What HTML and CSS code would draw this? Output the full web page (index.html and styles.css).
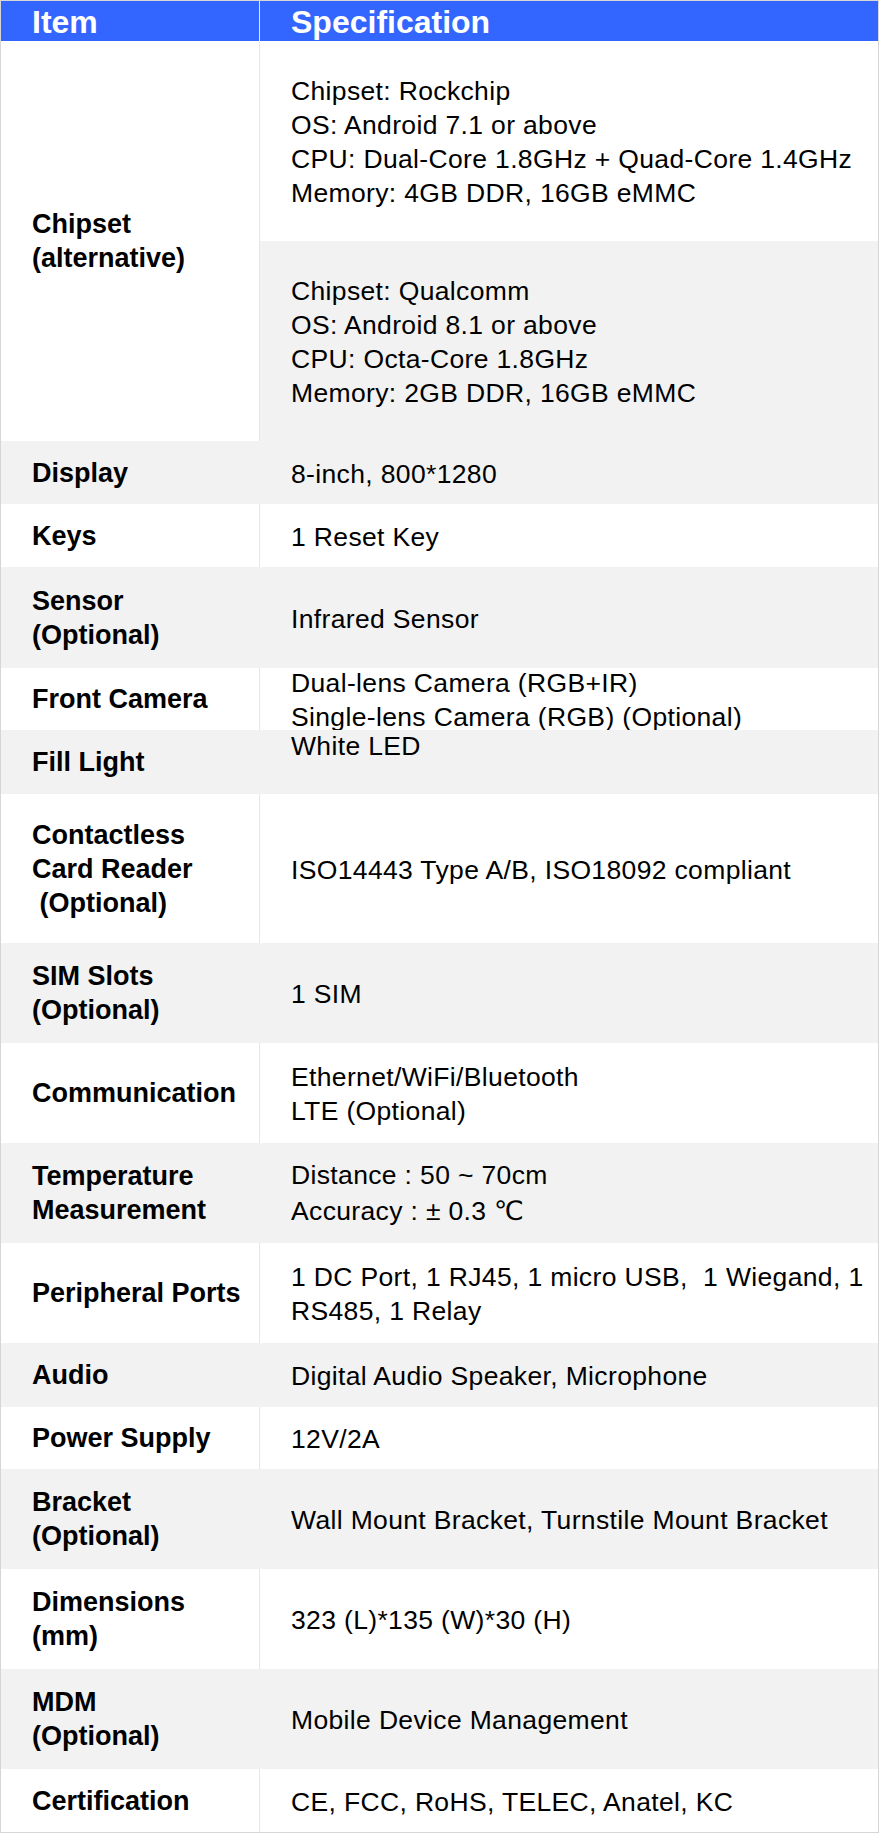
FILE: index.html
```html
<!DOCTYPE html>
<html lang="en">
<head>
<meta charset="utf-8">
<title>Specification</title>
<link rel="stylesheet" href="styles.css">
</head>
<body>
<table class="spec">
  <thead>
    <tr class="head">
      <th class="c1"><div class="hbox">Item</div></th>
      <th class="c2"><div class="hbox">Specification</div></th>
    </tr>
  </thead>
  <tbody>
    <tr class="w">
      <td class="label c1 keep" rowspan="2"><div class="box h400"><p>Chipset<br>(alternative)</p></div></td>
      <td class="val"><div class="box h200"><p>Chipset: Rockchip<br>OS: Android 7.1 or above<br>CPU: Dual-Core 1.8GHz + Quad-Core 1.4GHz<br>Memory: 4GB DDR, 16GB eMMC</p></div></td>
    </tr>
    <tr class="g">
      <td class="val"><div class="box h200"><p>Chipset: Qualcomm<br>OS: Android 8.1 or above<br>CPU: Octa-Core 1.8GHz<br>Memory: 2GB DDR, 16GB eMMC</p></div></td>
    </tr>
    <tr class="g">
      <td class="label c1"><div class="box h63"><p>Display</p></div></td>
      <td class="val"><div class="box h63"><p>8-inch, 800*1280</p></div></td>
    </tr>
    <tr class="w">
      <td class="label c1"><div class="box h63"><p>Keys</p></div></td>
      <td class="val"><div class="box h63"><p>1 Reset Key</p></div></td>
    </tr>
    <tr class="g">
      <td class="label c1"><div class="box h101"><p>Sensor<br>(Optional)</p></div></td>
      <td class="val"><div class="box h101"><p>Infrared Sensor</p></div></td>
    </tr>
    <tr class="w">
      <td class="label c1"><div class="box h62"><p>Front Camera</p></div></td>
      <td class="val"><div class="box h62"><p>Dual-lens Camera (RGB+IR)<br>Single-lens Camera (RGB) (Optional)</p></div></td>
    </tr>
    <tr class="g">
      <td class="label c1"><div class="box h64"><p>Fill Light</p></div></td>
      <td class="val"><div class="box h64"><p>White LED<br>&nbsp;</p></div></td>
    </tr>
    <tr class="w">
      <td class="label c1"><div class="box h149"><p>Contactless<br>Card Reader<br>&nbsp;(Optional)</p></div></td>
      <td class="val"><div class="box h149"><p>ISO14443 Type A/B, ISO18092 compliant</p></div></td>
    </tr>
    <tr class="g">
      <td class="label c1"><div class="box h100"><p>SIM Slots<br>(Optional)</p></div></td>
      <td class="val"><div class="box h100"><p>1 SIM</p></div></td>
    </tr>
    <tr class="w">
      <td class="label c1"><div class="box h100"><p>Communication</p></div></td>
      <td class="val"><div class="box h100"><p>Ethernet/WiFi/Bluetooth<br>LTE (Optional)</p></div></td>
    </tr>
    <tr class="g">
      <td class="label c1"><div class="box h100"><p>Temperature<br>Measurement</p></div></td>
      <td class="val"><div class="box h100"><p>Distance : 50 ~ 70cm<span class="tall">Accuracy : ± 0.3 ℃</span></p></div></td>
    </tr>
    <tr class="w">
      <td class="label c1"><div class="box h100"><p>Peripheral Ports</p></div></td>
      <td class="val"><div class="box h100"><p>1 DC Port, 1 RJ45, 1 micro USB,&nbsp; 1 Wiegand, 1<br>RS485, 1 Relay</p></div></td>
    </tr>
    <tr class="g">
      <td class="label c1"><div class="box h64"><p>Audio</p></div></td>
      <td class="val"><div class="box h64"><p>Digital Audio Speaker, Microphone</p></div></td>
    </tr>
    <tr class="w">
      <td class="label c1"><div class="box h62"><p>Power Supply</p></div></td>
      <td class="val"><div class="box h62"><p>12V/2A</p></div></td>
    </tr>
    <tr class="g">
      <td class="label c1"><div class="box h100"><p>Bracket<br>(Optional)</p></div></td>
      <td class="val"><div class="box h100"><p>Wall Mount Bracket, Turnstile Mount Bracket</p></div></td>
    </tr>
    <tr class="w">
      <td class="label c1"><div class="box h100"><p>Dimensions<br>(mm)</p></div></td>
      <td class="val"><div class="box h100"><p>323 (L)*135 (W)*30 (H)</p></div></td>
    </tr>
    <tr class="g">
      <td class="label c1"><div class="box h100"><p>MDM<br>(Optional)</p></div></td>
      <td class="val"><div class="box h100"><p>Mobile Device Management</p></div></td>
    </tr>
    <tr class="w">
      <td class="label c1"><div class="box h63"><p>Certification</p></div></td>
      <td class="val"><div class="box h63"><p>CE, FCC, RoHS, TELEC, Anatel, KC</p></div></td>
    </tr>
  </tbody>
</table>
</body>
</html>
```

FILE: styles.css
```css
* {
  box-sizing: border-box;
}

html,
body {
  margin: 0;
  padding: 0;
  background: #ffffff;
}

body {
  font-family: "Liberation Sans", Arial, "DejaVu Sans", sans-serif;
  color: #000000;
}

.spec {
  width: 879px;
  table-layout: fixed;
  border-collapse: separate;
  border-spacing: 0;
  border: 1px solid #d6d6d6;
}

.spec th,
.spec td {
  padding: 0;
  vertical-align: middle;
  text-align: left;
}

.c1 {
  width: 259px;
  border-right: 1px solid #e6e6e6;
}

/* header */
.head th {
  background: #3366ff;
  color: #ffffff;
}

.head .c1 {
  border-right-color: #dfe6ff;
}

.hbox {
  height: 40px;
  padding: 3px 0 0 31px;
  font-size: 32px;
  line-height: 37px;
  font-weight: bold;
  white-space: nowrap;
}

/* rows */
.w {
  background: #ffffff;
}

.g {
  background: #f2f2f2;
}

.g .c1 {
  border-right-color: #f2f2f2;
}

.keep {
  background: #ffffff;
}

.g .keep,
.w .keep {
  border-right-color: #e6e6e6;
}

.box {
  display: flex;
  flex-direction: column;
  justify-content: center;
  overflow: hidden;
  padding: 0 0 0 31px;
  white-space: nowrap;
}

.box p {
  margin: 0;
  font-size: 27px;
  line-height: 34px;
}

.val .box {
  padding-top: 2px;
}

.val .box p {
  font-size: 26.5px;
  letter-spacing: 0.35px;
}

.label .box p {
  font-weight: bold;
}

.tall {
  display: block;
  line-height: 38px;
}

.h62 { height: 62px; }
.h63 { height: 63px; }
.h64 { height: 64px; }
.h100 { height: 100px; }
.h101 { height: 101px; }
.h149 { height: 149px; }
.h200 { height: 200px; }
.h400 { height: 400px; }
```
